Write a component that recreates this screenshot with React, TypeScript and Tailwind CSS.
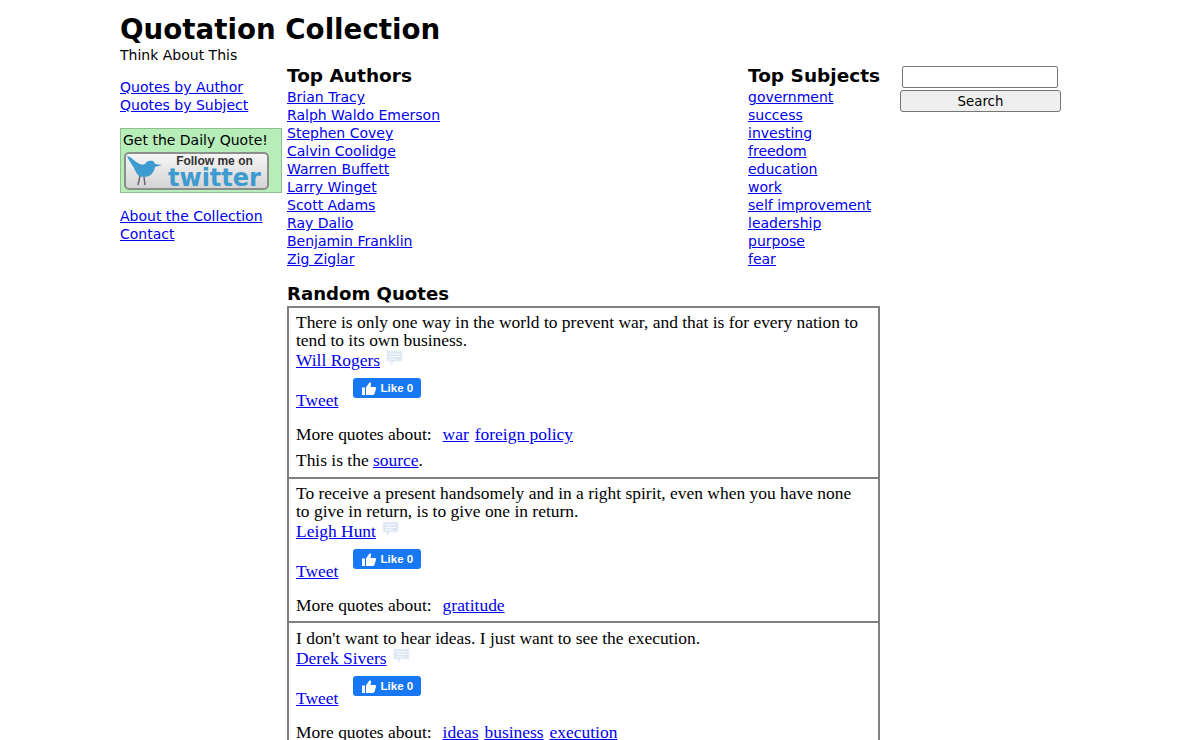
const authors = [
  "Brian Tracy",
  "Ralph Waldo Emerson",
  "Stephen Covey",
  "Calvin Coolidge",
  "Warren Buffett",
  "Larry Winget",
  "Scott Adams",
  "Ray Dalio",
  "Benjamin Franklin",
  "Zig Ziglar",
];

const subjects = [
  "government",
  "success",
  "investing",
  "freedom",
  "education",
  "work",
  "self improvement",
  "leadership",
  "purpose",
  "fear",
];

const quotes = [
  {
    lines: [
      "There is only one way in the world to prevent war, and that is for every nation to",
      "tend to its own business.",
    ],
    author: "Will Rogers",
    tags: ["war", "foreign policy"],
    source: true,
    top: "pt-[5px]",
  },
  {
    lines: [
      "To receive a present handsomely and in a right spirit, even when you have none",
      "to give in return, is to give one in return.",
    ],
    author: "Leigh Hunt",
    tags: ["gratitude"],
    source: false,
    top: "pt-[5px]",
  },
  {
    lines: ["I don't want to hear ideas. I just want to see the execution."],
    author: "Derek Sivers",
    tags: ["ideas", "business", "execution"],
    source: false,
    top: "pt-[6px]",
  },
];

function A({ children }: { children: React.ReactNode }) {
  return (
    <a href="#" className="text-[#0000ee] underline">
      {children}
    </a>
  );
}

function CommentIcon() {
  return (
    <svg width="18" height="17" viewBox="0 0 18 17" className="mb-[6px] ml-[6px] inline-block">
      <path d="M1 1h15v10H8l-3 4v-4H1z" fill="#dbe6f2" stroke="#eef3f8" />
      <path d="M3 4h11M3 6.500h11M3 9h8" stroke="#f7fafc" strokeWidth="1" />
    </svg>
  );
}

function TwitterBadge() {
  return (
    <div className="mt-[1px] ml-[1px] flex h-[38px] w-[145px] rounded-[5px] border-2 border-[#8b8f8c] bg-gradient-to-b from-[#f6f6f6] to-[#d4d4d4]">
      <svg width="42" height="34" viewBox="0 0 42 34" className="shrink-0">
        <path
          d="M1 2c5 1 7 5 11 7 3 2 5 2 7 1 1-3 5-4 8-3 1 1 2 2 2 3l7 1-7 2c-1 6-5 10-11 10-7 0-8-5-10-9C6 10 3 7 1 2z"
          fill="#3d9bd0"
        />
        <path d="M14 22l-2 9M18 23l1 8" stroke="#667" strokeWidth="1.500" />
      </svg>
      <div className="flex flex-col items-center font-['Liberation_Sans',sans-serif]">
        <span className="pt-[1px] text-[12px] leading-[13px] font-bold text-[#333]">Follow me on</span>
        <span className="font-['DejaVu_Sans',sans-serif] text-[24px] leading-[20px] font-bold text-[#3d9bd0]">
          twitter
        </span>
      </div>
    </div>
  );
}

function LikeButton() {
  return (
    <span className="ml-[15px] inline-flex h-[20px] w-[68px] items-center justify-center gap-[5px] rounded-[3px] bg-[#1877f2] font-['Liberation_Sans',sans-serif] text-[11.500px] font-bold text-white">
      <svg width="14" height="13" viewBox="0 0 14 13" fill="white">
        <path d="M0 5.500h3V13H0z" />
        <path d="M4 5.500 7 1c.5-1 2.500-.5 2 1.500L8.500 5H13c1 0 1.300 1 1 1.800l-1.500 5c-.2.700-.7 1.200-1.500 1.200H4z" />
      </svg>
      Like 0
    </span>
  );
}

function Quote({ q }: { q: (typeof quotes)[number] }) {
  return (
    <div
      className={`-mb-[2px] border-2 border-[#808080] pr-[6px] pb-[7px] pl-[7px] font-['Liberation_Serif',serif] text-[17.450px] leading-[18px] text-black ${q.top}`}
    >
      {q.lines.map((l) => (
        <div key={l} className="whitespace-nowrap">
          {l}
        </div>
      ))}
      <div className="mt-[1px] h-[20px]">
        <A>{q.author}</A>
        <CommentIcon />
      </div>
      <div className="mt-[8px] flex h-[31px] items-start">
        <span className="mt-[13px]">
          <A>Tweet</A>
        </span>
        <LikeButton />
      </div>
      <div className="mt-[16px] flex gap-[6px]">
        <span className="mr-[5px]">More quotes about:</span>
        {q.tags.map((t) => (
          <A key={t}>{t}</A>
        ))}
      </div>
      {q.source && (
        <div className="mt-[8px] mb-[1px]">
          This is the <A>source</A>.
        </div>
      )}
    </div>
  );
}

export default function App() {
  return (
    <div className="h-[740px] overflow-hidden bg-white pl-[120px] font-['DejaVu_Sans',sans-serif] text-[14px] leading-[18px] text-black">
      <h1 className="pt-[13px] text-[27.700px] leading-[33px] font-bold">Quotation Collection</h1>
      <div className="flex">
        <div className="w-[162px] shrink-0">
          <div>Think About This</div>
          <div className="mt-[14px] flex flex-col items-start">
            <A>Quotes by Author</A>
            <A>Quotes by Subject</A>
          </div>
          <div className="mt-[14px] h-[65px] border border-[#8fbf8f] bg-[#b6edb9] pl-[2px]">
            <div className="leading-[22px]">Get the Daily Quote!</div>
            <TwitterBadge />
          </div>
          <div className="mt-[14px] flex flex-col items-start">
            <A>About the Collection</A>
            <A>Contact</A>
          </div>
        </div>
        <div className="ml-[5px] w-[593px] shrink-0 pt-[18px]">
          <div className="flex">
            <div className="w-[461px] shrink-0">
              <h2 className="mb-[1px] text-[18.500px] leading-[23px] font-bold">Top Authors</h2>
              <div className="flex flex-col items-start">
                {authors.map((a) => (
                  <A key={a}>{a}</A>
                ))}
              </div>
            </div>
            <div className="shrink-0">
              <h2 className="mb-[1px] text-[18.500px] leading-[23px] font-bold whitespace-nowrap">Top Subjects</h2>
              <div className="flex flex-col items-start">
                {subjects.map((s) => (
                  <A key={s}>{s}</A>
                ))}
              </div>
            </div>
          </div>
          <h2 className="mt-[16px] text-[18.100px] leading-[20px] font-bold">Random Quotes</h2>
          <div className="mt-[2px]">
            {quotes.map((q) => (
              <Quote key={q.author} q={q} />
            ))}
          </div>
        </div>
        <div className="ml-[20px] flex w-[161px] shrink-0 flex-col items-start pt-[20px]">
          <input className="ml-[2px] h-[22px] w-[156px] rounded-[2px] border border-[#767676] bg-white" />
          <button className="mt-[2px] h-[22px] w-[161px] rounded-[3px] border border-[#767676] bg-[#efefef] pt-[2px] text-[13.333px]">
            Search
          </button>
        </div>
      </div>
    </div>
  );
}
